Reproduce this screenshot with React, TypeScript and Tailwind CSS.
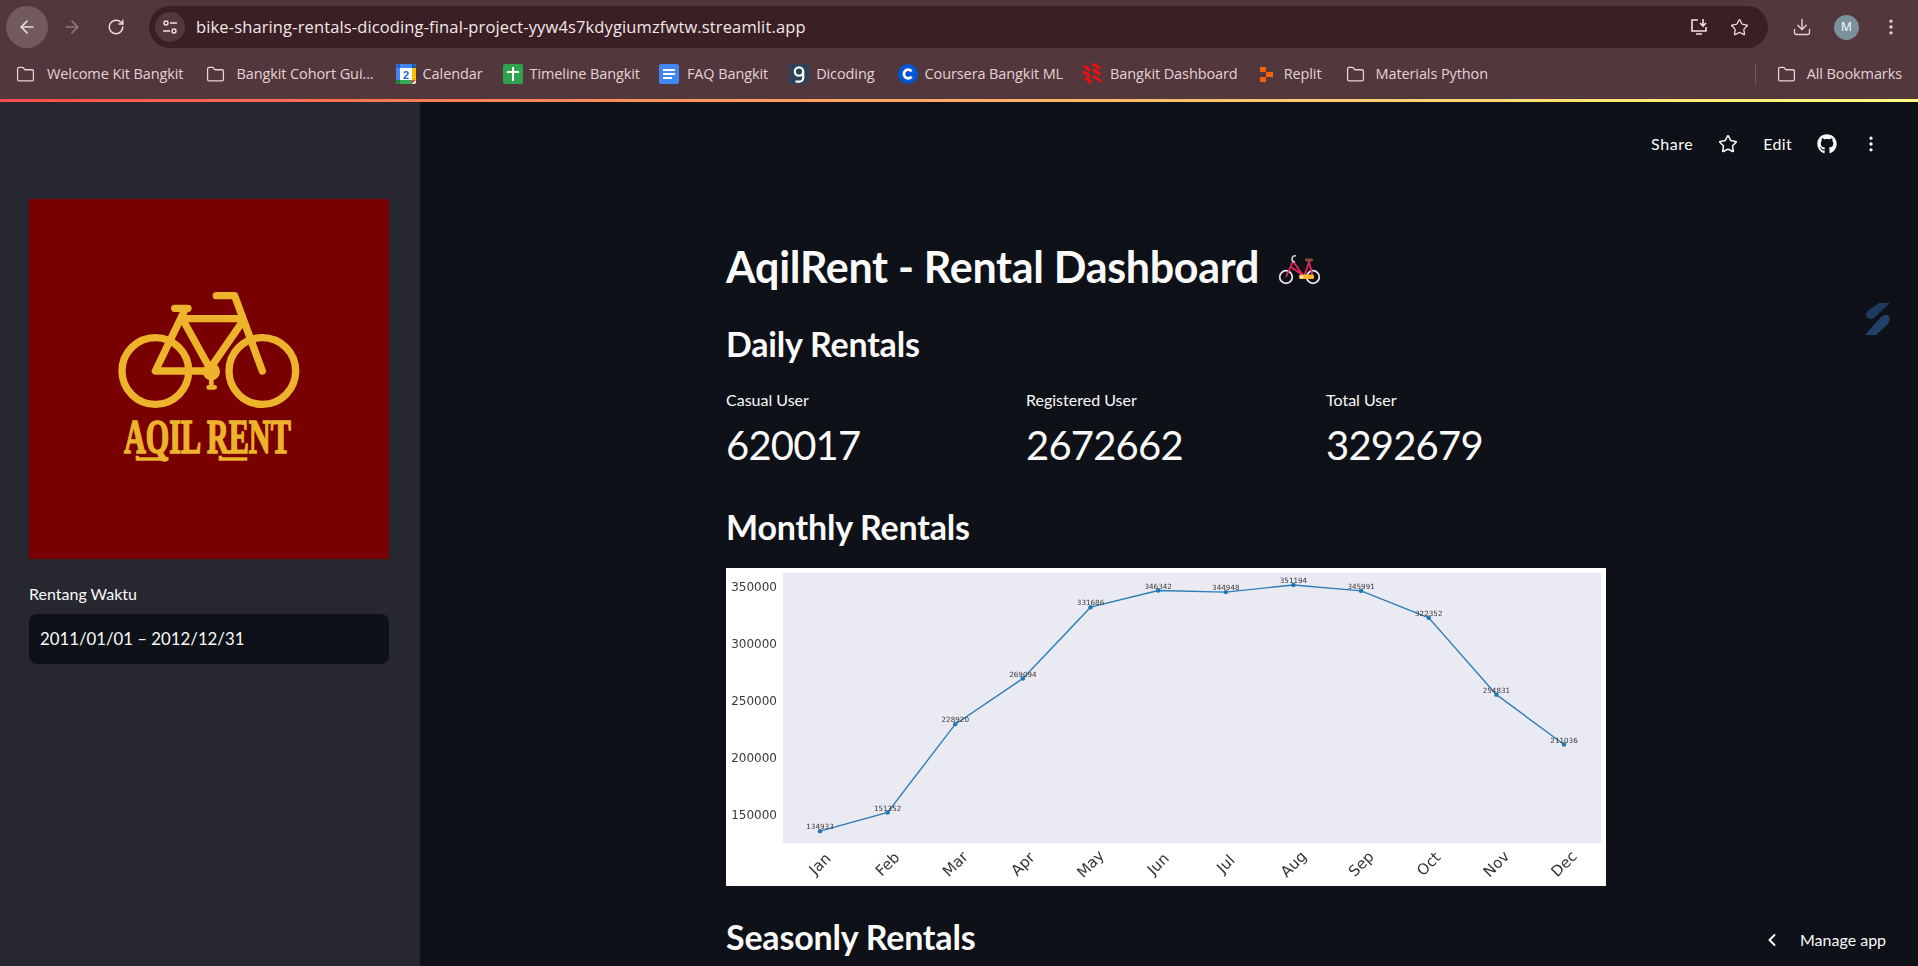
import { ArrowLeft, ArrowRight, RotateCw, Star, Download, EllipsisVertical, ChevronLeft, Folder } from 'lucide-react'
import { FaGithub } from 'react-icons/fa'

const months = [
  ['Jan', 134933], ['Feb', 151352], ['Mar', 228920], ['Apr', 269094],
  ['May', 331686], ['Jun', 346342], ['Jul', 344948], ['Aug', 351194],
  ['Sep', 345991], ['Oct', 322352], ['Nov', 254831], ['Dec', 211036],
] as const

const px = (i: number) => 94 + i * 67.64
const py = (v: number) => 246 - (v - 150000) * 0.0011383

function FolderIcon() {
  return <Folder size={19} strokeWidth={1.6} className="text-[#e8d5d8] shrink-0" />
}

function CalendarIcon() {
  return (
    <svg width="20" height="20" viewBox="0 0 20 20" className="shrink-0">
      <rect width="20" height="20" rx="2" fill="#fff" />
      <path d="M0 2a2 2 0 0 1 2-2h2v4H0z" fill="#1967d2" />
      <rect x="4" width="12" height="4" fill="#4285f4" />
      <path d="M16 0h2a2 2 0 0 1 2 2v2h-4z" fill="#1a56b8" />
      <rect x="16" y="4" width="4" height="12" fill="#fbbc04" />
      <rect y="4" width="4" height="12" fill="#4285f4" />
      <rect x="4" y="16" width="12" height="4" fill="#34a853" />
      <path d="M0 16h4v4H2a2 2 0 0 1-2-2z" fill="#188038" />
      <path d="M16 16h4l-4 4z" fill="#ea4335" />
      <text x="10" y="14.5" textAnchor="middle" fontSize="11" fontWeight="700" fontFamily="Liberation Sans, sans-serif" fill="#1967d2">2</text>
    </svg>
  )
}

function SheetIcon() {
  return (
    <svg width="20" height="20" viewBox="0 0 20 20" className="shrink-0">
      <rect width="20" height="20" rx="2" fill="#2ea44f" />
      <path d="M9 3h2v4h5v2h-5v8H9V9H4V7h5z" fill="#fff" />
    </svg>
  )
}

function DocIcon() {
  return (
    <svg width="20" height="20" viewBox="0 0 20 20" className="shrink-0">
      <rect width="20" height="20" rx="2" fill="#4285f4" />
      <path d="M4 5h12v2H4zM4 9h12v2H4zM4 13h9v2H4z" fill="#fff" />
    </svg>
  )
}

function DicodingIcon() {
  return (
    <svg width="20" height="20" viewBox="0 0 20 20" className="shrink-0">
      <rect width="20" height="20" fill="#2b4258" />
      <circle cx="10" cy="7.5" r="4.2" fill="none" stroke="#fff" strokeWidth="2.2" />
      <path d="M14.2 7.5v6.5a4 4 0 0 1-4 3.6H6.5" fill="none" stroke="#fff" strokeWidth="2.2" />
    </svg>
  )
}

function CourseraIcon() {
  return (
    <svg width="20" height="20" viewBox="0 0 20 20" className="shrink-0">
      <circle cx="10" cy="10" r="10" fill="#0056d2" />
      <path d="M13.6 7.4a4.3 4.3 0 1 0 0 5.2" fill="none" stroke="#fff" strokeWidth="2.8" />
    </svg>
  )
}

function BangkitIcon() {
  return (
    <svg width="20" height="22" viewBox="0 0 20 22" className="shrink-0">
      <path d="M2 3Q5 4 8 8M1 9Q5 10 8 14M3 15Q6 16 9 20M10 1Q14 2 18 6M11 7Q15 8 18 12M11 13Q15 15 19 19" fill="none" stroke="#ee0f14" strokeWidth="3" />
    </svg>
  )
}

function ReplitIcon() {
  return (
    <svg width="16" height="20" viewBox="0 0 16 20" className="shrink-0">
      <path d="M2 3h6v5H2zM8 8h7v5H8zM2 13h6v5H2z" fill="#f26207" />
    </svg>
  )
}

function BikeEmoji() {
  return (
    <svg width="46" height="36" viewBox="0 0 46 36" className="ml-[19px] shrink-0 mt-[8px]">
      <circle cx="8" cy="24" r="6.3" fill="none" stroke="#f1e8f4" strokeWidth="1.7" />
      <circle cx="35" cy="24" r="6.3" fill="none" stroke="#f1e8f4" strokeWidth="1.7" />
      <path d="M8 24 L15 8 L26 24 L31 9 L35 24 M13 14 L26 23" fill="none" stroke="#e8265a" strokeWidth="1.8" />
      <path d="M18 3 a3 3 0 0 0 -4 3 a3 3 0 0 0 3 3" fill="none" stroke="#cfcfcf" strokeWidth="1.6" />
      <rect x="27" y="5.5" width="8" height="3" rx="1" fill="#8a4b3a" />
      <rect x="21" y="21.5" width="15" height="4.5" rx="1.5" fill="#f7b42c" />
      <circle cx="24" cy="24" r="1.6" fill="#fff3c4" />
    </svg>
  )
}

function Logo() {
  return (
    <svg viewBox="0 0 1080 1080" className="w-[360px] h-[360px] block bg-[#780000]">
      <g fill="none" stroke="#edb42b" strokeWidth="22" strokeLinecap="round" strokeLinejoin="round">
        <circle cx="379" cy="516" r="100" />
        <circle cx="700" cy="516" r="100" />
        <path d="M437 328h40M465 338L379 516H547L462 363M472 359H627M637 373L547 503M562 290H617L700 516" />
        <path d="M547 533V565M539 565H557" strokeWidth="14" />
      </g>
      <circle cx="547" cy="518" r="26" fill="#edb42b" />
      <text transform="translate(285 762) scale(0.62 1)" fontFamily="Liberation Serif, serif" fontWeight="700" fontSize="146" fill="#edb42b" stroke="#edb42b" strokeWidth="5">AQIL RENT</text>
      <path d="M325 770V780H404M574 770V780H655" fill="none" stroke="#edb42b" strokeWidth="10" />
    </svg>
  )
}

function Chart() {
  const points = months.map(([, v], i) => `${px(i)},${py(v)}`).join(' ')
  return (
    <svg width="880" height="318" viewBox="0 0 880 318" className="block bg-white blur-[0.3px]" fontFamily="DejaVu Sans, sans-serif">
      <rect x="57" y="5" width="818" height="270" fill="#eaeaf2" />
      {[350000, 300000, 250000, 200000, 150000].map(t => (
        <text key={t} x="51" y={py(t) + 1} textAnchor="end" dominantBaseline="central" fontSize="12" fill="#3a3a3a">{t}</text>
      ))}
      <polyline points={points} fill="none" stroke="#2b7fb8" strokeWidth="1.4" />
      {months.map(([m, v], i) => (
        <g key={m}>
          <circle cx={px(i)} cy={py(v)} r="2.2" fill="#1f77b4" />
          <text x={px(i)} y={py(v) - 4.3} textAnchor="middle" dominantBaseline="central" fontSize="7.2" fill="#3a3a3a">{v}</text>
          <text x={px(i)} y="296" textAnchor="middle" dominantBaseline="central" fontSize="15" fill="#333" transform={`rotate(-45 ${px(i)} 296)`}>{m}</text>
        </g>
      ))}
    </svg>
  )
}

function Metric({ label, value }: { label: string; value: string }) {
  return (
    <div>
      <div className="text-[16px] leading-[20px] text-[#fafafa]">{label}</div>
      <div className="text-[40px] leading-[48px] mt-[11px] text-[#fafafa] tracking-[-0.8px]">{value}</div>
    </div>
  )
}

export default function App() {
  return (
    <div className="relative w-[1918px] h-[966px] overflow-hidden flex flex-col bg-[#0e1117] font-['Lato',sans-serif]">
      {/* browser chrome */}
      <div className="h-[99px] shrink-0 bg-[#52373c] font-['Open_Sans',sans-serif]">
        <div className="h-[54px] flex items-center pl-[6px]">
          <div className="w-[42px] h-[42px] rounded-full bg-[#735a5f] flex items-center justify-center shrink-0">
            <ArrowLeft size={20} className="text-[#ecdcdf]" />
          </div>
          <ArrowRight size={20} className="text-[#8e777b] ml-[14px] shrink-0" />
          <RotateCw size={18} className="text-[#ecdcdf] ml-[25px] shrink-0" />
          <div className="ml-[24px] w-[1619px] shrink-0 h-[42px] rounded-full bg-[#3a2024] flex items-center pl-[6px] pr-[19px]">
            <div className="w-[30px] h-[30px] rounded-full bg-[#52373c] flex items-center justify-center">
              <svg width="16" height="16" viewBox="0 0 16 16" fill="none" stroke="#f0e2e4" strokeWidth="1.4">
                <circle cx="4" cy="4" r="2" /><path d="M8 4h7M1 12h7" /><circle cx="12" cy="12" r="2" />
              </svg>
            </div>
            <span className="ml-[11px] text-[16.5px] text-[#f3e6e8] tracking-[0.13px]">bike-sharing-rentals-dicoding-final-project-yyw4s7kdygiumzfwtw.streamlit.app</span>
            <svg width="20" height="20" viewBox="0 0 20 20" fill="none" stroke="#f0e2e4" strokeWidth="1.6" className="ml-auto">
              <path d="M9 3H3v11h14V10M7 17h6M14 2v7M11 6l3 3 3-3" />
            </svg>
            <Star size={19} strokeWidth={1.6} className="text-[#f0e2e4] ml-[21px]" />
          </div>
          <Download size={20} strokeWidth={1.7} className="text-[#e8d0d4] ml-[24px] shrink-0" />
          <div className="w-[25px] h-[25px] rounded-full bg-[#7b919b] text-white text-[12px] flex items-center justify-center ml-[22px] shrink-0">M</div>
          <EllipsisVertical size={20} className="text-[#e8d0d4] ml-[22px] shrink-0" />
        </div>
        <div className="h-[40px] flex items-center pl-[16px] pr-[16px] text-[14.5px] text-[#e3d3d6] tracking-[-0.1px] whitespace-nowrap">
          <FolderIcon /><span className="ml-[12px]">Welcome Kit Bangkit</span>
          <span className="ml-[23px]"><FolderIcon /></span><span className="ml-[11px]">Bangkit Cohort Gui...</span>
          <span className="ml-[22px]"><CalendarIcon /></span><span className="ml-[7px]">Calendar</span>
          <span className="ml-[20px]"><SheetIcon /></span><span className="ml-[7px]">Timeline Bangkit</span>
          <span className="ml-[19px]"><DocIcon /></span><span className="ml-[8px]">FAQ Bangkit</span>
          <span className="ml-[21px]"><DicodingIcon /></span><span className="ml-[7px]">Dicoding</span>
          <span className="ml-[23px]"><CourseraIcon /></span><span className="ml-[7px]">Coursera Bangkit ML</span>
          <span className="ml-[19px]"><BangkitIcon /></span><span className="ml-[8px]">Bangkit Dashboard</span>
          <span className="ml-[20px]"><ReplitIcon /></span><span className="ml-[10px]">Replit</span>
          <span className="ml-[24px]"><FolderIcon /></span><span className="ml-[11px]">Materials Python</span>
          <div className="ml-auto flex items-center">
            <div className="w-px h-[20px] bg-[#715a5e] mr-[21px]" />
            <FolderIcon /><span className="ml-[11px]">All Bookmarks</span>
          </div>
        </div>
      </div>
      <div className="h-[3px] shrink-0 bg-gradient-to-r from-[#ff4b4b] to-[#fffd80]" />

      {/* app */}
      <div className="flex-1 flex min-h-0 text-[#fafafa]">
        <aside className="w-[420px] shrink-0 bg-[#262730] pl-[29px] pr-[31px] pt-[97px]">
          <Logo />
          <div className="mt-[25px] text-[16px] leading-[20px]">Rentang Waktu</div>
          <div className="mt-[10px] h-[50px] rounded-[8px] bg-[#0e1117] flex items-center px-[11px] text-[16.8px]">2011/01/01 – 2012/12/31</div>
        </aside>
        <main className="flex-1 min-w-0 pl-[306px] pt-[135px]">
          <div className="w-[880px]">
            <div className="flex items-center h-[60px]">
              <h1 className="text-[43px] leading-[60px] font-bold tracking-[-0.3px]">AqilRent - Rental Dashboard</h1>
              <BikeEmoji />
            </div>
            <h2 className="mt-[25px] text-[34px] leading-[44px] font-bold tracking-[-0.2px]">Daily Rentals</h2>
            <div className="grid grid-cols-[300px_300px_280px] mt-[24px]">
              <Metric label="Casual User" value="620017" />
              <Metric label="Registered User" value="2672662" />
              <Metric label="Total User" value="3292679" />
            </div>
            <h2 className="mt-[36px] text-[34px] leading-[44px] font-bold tracking-[-0.2px]">Monthly Rentals</h2>
            <div className="mt-[19px]"><Chart /></div>
            <h2 className="mt-[29px] text-[34px] leading-[44px] font-bold tracking-[-0.2px]">Seasonly Rentals</h2>
          </div>
        </main>
      </div>

      {/* streamlit header */}
      <div className="absolute top-[132px] right-[37px] flex items-center text-[#fafafa] text-[16px]">
        <span className="tracking-[0.6px]">Share</span>
        <Star size={20} strokeWidth={1.8} className="ml-[25px]" />
        <span className="ml-[25px] tracking-[0.3px]">Edit</span>
        <FaGithub size={20} className="ml-[25px]" />
        <EllipsisVertical size={20} className="ml-[24px]" />
      </div>
      <svg width="26" height="34" viewBox="0 0 26 34" className="absolute left-[1865px] top-[302px]">
        <path d="M14 1H25L9 16Q3 19 1 13Q1 10 4 8z" fill="#1c3a60" />
        <path d="M24 14Q26 19 22 23L11 33H0L16 15Q21 11 24 14z" fill="#1f4068" />
      </svg>
      <div className="absolute top-[928px] left-[1762px] flex items-center text-[16px] text-[#fafafa]">
        <ChevronLeft size={20} strokeWidth={2.4} />
        <span className="ml-[18px]">Manage app</span>
      </div>
    </div>
  )
}
